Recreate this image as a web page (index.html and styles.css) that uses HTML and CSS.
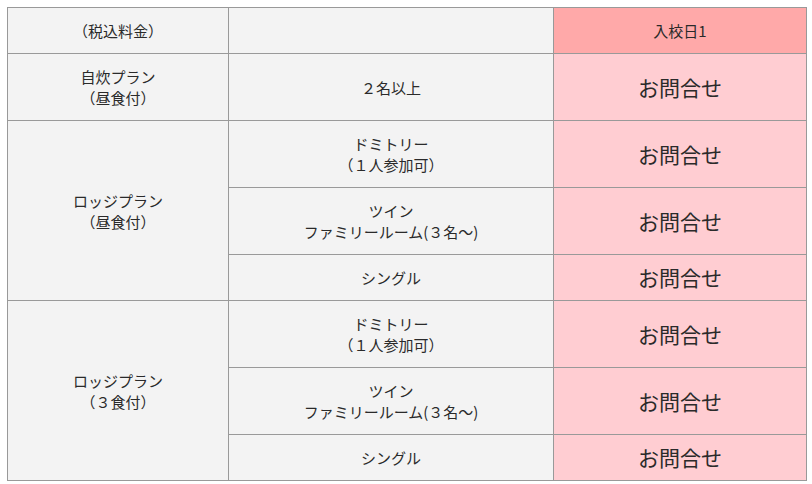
FILE: index.html
```html
<!DOCTYPE html>
<html lang="ja">
<head>
<meta charset="utf-8">
<link rel="stylesheet" href="styles.css">
</head>
<body>
<div class="wrap">
<table class="price">
  <colgroup>
    <col class="c1">
    <col class="c2">
    <col class="c3">
  </colgroup>
  <tr>
    <th class="gray">（税込料金）</th>
    <th class="gray"></th>
    <th class="head">入校日1</th>
  </tr>
  <tr>
    <td class="gray">自炊プラン<br>（昼食付）</td>
    <td class="gray">２名以上</td>
    <td class="pink">お問合せ</td>
  </tr>
  <tr>
    <td class="gray" rowspan="3">ロッジプラン<br>（昼食付）</td>
    <td class="gray">ドミトリー<br>（１人参加可）</td>
    <td class="pink">お問合せ</td>
  </tr>
  <tr>
    <td class="gray">ツイン<br>ファミリールーム(３名～)</td>
    <td class="pink">お問合せ</td>
  </tr>
  <tr>
    <td class="gray">シングル</td>
    <td class="pink">お問合せ</td>
  </tr>
  <tr>
    <td class="gray" rowspan="3">ロッジプラン<br>（３食付）</td>
    <td class="gray">ドミトリー<br>（１人参加可）</td>
    <td class="pink">お問合せ</td>
  </tr>
  <tr>
    <td class="gray">ツイン<br>ファミリールーム(３名～)</td>
    <td class="pink">お問合せ</td>
  </tr>
  <tr>
    <td class="gray">シングル</td>
    <td class="pink">お問合せ</td>
  </tr>
</table>
</div>
</body>
</html>
```

FILE: styles.css
```css
html, body {
  margin: 0;
  padding: 0;
  background: #ffffff;
}
.wrap {
  padding: 7px;
}
.price {
  border-collapse: collapse;
  width: 799px;
  table-layout: fixed;
  font-family: "Noto Sans CJK JP", "Noto Sans", sans-serif;
  font-size: 15px;
  line-height: 21px;
  color: #2a2a2a;
}
.c1 { width: 221px; }
.c2 { width: 325px; }
.c3 { width: 253px; }
.price th,
.price td {
  border: 1px solid #999999;
  padding: 12px 8px;
  text-align: center;
  vertical-align: middle;
  font-weight: normal;
}
.gray {
  background: #f3f3f3;
}
.head {
  background: #ffa9a9;
}
.pink {
  background: #ffcdd2;
  font-size: 21px;
  line-height: 21px;
}
```
